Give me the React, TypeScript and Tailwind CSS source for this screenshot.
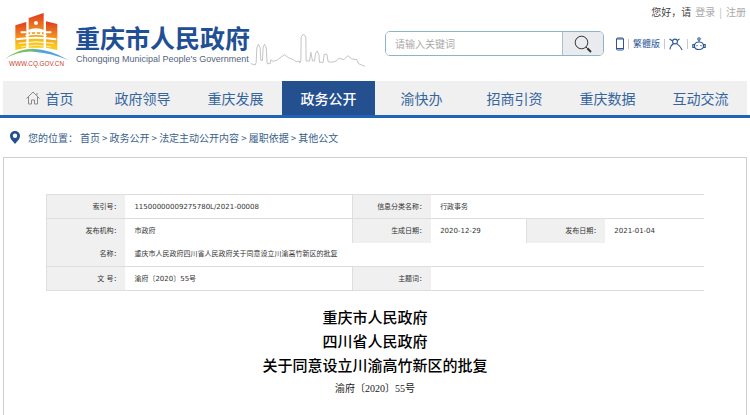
import React from 'react';

const navItems = ['首页', '政府领导', '重庆发展', '政务公开', '渝快办', '招商引资', '重庆数据', '互动交流'];

const crumbs = ['首页', '政务公开', '法定主动公开内容', '履职依据', '其他公文'];

function Emblem() {
    return (
        <svg viewBox="9 33 198 174" className="h-[58px] w-[66px] shrink-0" role="img" aria-label="重庆市人民政府">
            <defs>
                <linearGradient id="panel" x1="0" y1="0" x2="0" y2="1">
                    <stop offset="0" stopColor="#dd3b1f" />
                    <stop offset="0.4" stopColor="#ee7a1e" />
                    <stop offset="0.85" stopColor="#fbc81c" />
                </linearGradient>
                <linearGradient id="river" x1="0" y1="0" x2="1" y2="0">
                    <stop offset="0" stopColor="#7cc142" />
                    <stop offset="0.4" stopColor="#6fbf6a" />
                    <stop offset="0.6" stopColor="#4aa5dc" />
                    <stop offset="1" stopColor="#5b9fd8" />
                </linearGradient>
            </defs>
            <path d="M46 76 L79 66 V143 L46 150 Z" fill="url(#panel)" />
            <path d="M86 54 L131 39 V143 H86 Z" fill="url(#panel)" />
            <path d="M138 64 L172 72 V150 L138 143 Z" fill="url(#panel)" />
            <circle cx="108" cy="69" r="6" fill="#fff" />
            <path d="M82 91 Q108 78 134 91 V97 H82 Z" fill="#fff" />
            <path d="M90 97 H96 V104 H90 Z M105 97 H111 V104 H105 Z M120 97 H126 V104 H120 Z" fill="#fff" />
            <path d="M62 94 H79 V100 H62 Z M138 94 H154 V100 H138 Z" fill="#fff" />
            <path d="M76 107 Q108 99 140 107" fill="none" stroke="#fff" strokeWidth="4" />
            <path d="M49 118 Q108 108 169 118" fill="none" stroke="#fff" strokeWidth="6" />
            <path d="M56 130 Q108 121 161 130" fill="none" stroke="#fff" strokeWidth="3" />
            <path d="M64 140 Q108 132 152 140" fill="none" stroke="#fff" strokeWidth="2" />
            <path d="M14 178 Q52 146 98 146 Q152 148 205 180 Q150 158 100 155 Q52 153 14 178 Z" fill="url(#river)" />
            <text x="27" y="199" fontFamily="Liberation Sans, sans-serif" fontSize="19" fill="#c8412f">
                WWW.CQ.GOV.CN
            </text>
        </svg>
    );
}

function Skyline() {
    return (
        <svg viewBox="0 0 350 105" className="h-[35px] w-[117px]" fill="none" stroke="#b8b8b8" strokeWidth="2.5" aria-hidden="true">
            <path d="M2 92 L15 96 L18 88 L20 44 L25 34 L30 44 L32 82 L37 82 L39 42 L43 34 L48 42 L51 92 L60 92 L62 80 L68 85 L80 82 L90 74 L103 65 L115 74 L130 80 L138 86 L147 84 L149 90 L152 84 L153 12 L160 3 L167 12 L168 84 L178 84 L182 58 L187 84 L193 84 L196 62 L201 54 L206 64 L208 88 L219 88 L222 64 L230 64 L234 86 L244 88 L258 84 L267 76 L282 80 L293 68 L305 78 L320 80 L325 92 L345 100" />
        </svg>
    );
}

function Divider() {
    return <span className="h-[10px] w-px bg-[#c3cad4]" />;
}

function Header() {
    return (
        <header className="flex items-start pr-1 pb-3 pl-[3px]">
            <a href="#" className="flex shrink-0 items-start pt-[11px]">
                <Emblem />
                <div className="ml-1.5 pt-3 whitespace-nowrap">
                    <h1 className="text-[25px] leading-7 font-bold text-[#1f4f94]">重庆市人民政府</h1>
                    <p className="pl-px font-['Liberation_Sans',sans-serif] text-[9px] leading-4 text-[#56657c]">Chongqing Municipal People's Government</p>
                </div>
            </a>
            <div className="shrink-0 pt-[33px]">
                <Skyline />
            </div>
            <div className="ml-[18px] min-w-0 flex-1">
                <div className="flex h-[31px] items-start justify-end gap-1 pt-1 text-[10px] leading-4 text-[#444]">
                    <span>您好，请</span>
                    <a href="#" className="text-[#aaa]">登录</a>
                    <span className="text-[#bbb]">|</span>
                    <a href="#" className="text-[#aaa]">注册</a>
                </div>
                <div className="flex h-[25px] items-center">
                    <form className="flex h-full min-w-0 flex-1 overflow-hidden rounded-[5px] border border-[#8fb4c9]">
                        <input
                            type="text"
                            aria-label="搜索"
                            placeholder="请输入关键词"
                            className="min-w-0 flex-1 bg-white px-[9px] text-[10px] outline-none placeholder:text-[#aaa]"
                        />
                        <button type="button" aria-label="搜索" className="flex w-[41px] shrink-0 items-center justify-center border-l border-[#a9c0ce] bg-[#e9ebee]">
                            <svg viewBox="0 0 18 18" className="size-[18px]" fill="none" stroke="#333" strokeWidth="1">
                                <circle cx="7.5" cy="7.5" r="6.3" />
                                <path d="M12 12 L13.5 13.5" />
                                <path d="M13.3 13.3 L17 17" strokeWidth="2" />
                            </svg>
                        </button>
                    </form>
                    <nav className="ml-3 flex w-[130px] shrink-0 items-center gap-1 text-[9px] text-[#2c5794]">
                        <a href="#" aria-label="手机版">
                            <svg viewBox="0 0 8 14" className="h-[14px] w-2" fill="none" stroke="#2c5794">
                                <rect x="0.5" y="1" width="7" height="12" rx="1" />
                                <path d="M1 2 H7 M1 11.5 H7" />
                            </svg>
                        </a>
                        <Divider />
                        <a href="#">繁體版</a>
                        <Divider />
                        <a href="#" aria-label="无障碍">
                            <svg viewBox="0 0 14 14" className="size-[14px]" fill="none" stroke="#2c5794" strokeWidth="1.1">
                                <circle cx="6" cy="4.5" r="2.4" />
                                <path d="M0.5 2 L3.6 4 M8.2 3.6 L10.5 2 M4.5 6.5 C2.5 8 1.2 10 1 12.5 M7.8 6.6 C10 8.2 12 10.5 13.2 13" />
                            </svg>
                        </a>
                        <Divider />
                        <a href="#" aria-label="智能问答">
                            <svg viewBox="0 0 14 14" className="size-[14px]" fill="none" stroke="#2c5794" strokeWidth="1.1">
                                <circle cx="7" cy="2" r="1.2" />
                                <path d="M7 3.2 V5 M2.5 9 C2.5 6.5 4.2 5 7 5 C9.8 5 11.5 6.5 11.5 9 C11.5 11.5 9.8 12.5 7 12.5 C4.2 12.5 2.5 11.5 2.5 9 Z M2.5 7.6 H0.8 V10.4 H2.6 M11.5 7.6 H13.2 V10.4 H11.4" />
                                <path d="M5 8 V9.3 M9 8 V9.3" />
                            </svg>
                        </a>
                    </nav>
                </div>
            </div>
        </header>
    );
}

const labelCell = 'border-l border-[#dedede] bg-[#f0f0f0] pr-[5px] text-right font-normal';
const valueCell = 'pl-[9px]';

function InfoTable() {
    return (
        <table className="w-full table-fixed border-collapse font-['DejaVu_Sans','Noto_Sans_CJK_SC',sans-serif] text-[7px] leading-[10px] text-[#333]">
            <colgroup>
                <col className="w-[12%]" />
                <col className="w-[34.5%]" />
                <col className="w-[12%]" />
                <col className="w-[14.5%]" />
                <col className="w-[12%]" />
                <col className="w-[15%]" />
            </colgroup>
            <tbody>
                <tr className="h-6 border-t border-[#dedede]">
                    <th scope="row" className={labelCell}>索引号：</th>
                    <td className={valueCell}>11500000009275780L/2021-00008</td>
                    <th scope="row" className={labelCell}>信息分类名称：</th>
                    <td colSpan={3} className={valueCell}>行政事务</td>
                </tr>
                <tr className="h-6 border-t border-[#dedede]">
                    <th scope="row" className={labelCell}>发布机构：</th>
                    <td className={valueCell}>市政府</td>
                    <th scope="row" className={labelCell}>生成日期：</th>
                    <td className={valueCell}>2020-12-29</td>
                    <th scope="row" className={labelCell}>发布日期：</th>
                    <td className={valueCell}>2021-01-04</td>
                </tr>
                <tr className="h-6">
                    <th scope="row" className={labelCell}>名称：</th>
                    <td colSpan={5} className={valueCell}>重庆市人民政府四川省人民政府关于同意设立川渝高竹新区的批复</td>
                </tr>
                <tr className="h-6 border-y border-[#dedede]">
                    <th scope="row" className={labelCell}>文 号：</th>
                    <td className={valueCell}>渝府〔2020〕55号</td>
                    <th scope="row" className={labelCell}>主题词：</th>
                    <td colSpan={3} className={valueCell}></td>
                </tr>
            </tbody>
        </table>
    );
}

export default function App() {
    return (
        <div className="flex min-h-screen flex-col bg-white font-['Noto_Sans_CJK_SC',sans-serif]">
            <Header />
            <nav className="border-b-[3px] border-[#1f63b5] px-[3px]">
                <ul className="grid grid-cols-8 bg-[#f0f0f0] text-[14px] text-[#34659f]">
                    {navItems.map((item) => (
                        <li key={item}>
                            <a
                                href="#"
                                className={
                                    item === '政务公开'
                                        ? 'flex h-[34px] items-center justify-center bg-[#24508f] font-medium text-white'
                                        : 'flex h-[34px] items-center justify-center gap-1.5'
                                }
                            >
                                {item === '首页' && (
                                    <svg viewBox="0 0 14 14" className="size-[14px]" fill="none" stroke="#8a8a8a" aria-hidden="true">
                                        <path d="M0.5 7.5 L7 1 L13.5 7.5 M2.5 6 V13 H5.5 V9 H8.5 V13 H11.5 V6 M11 4.5 V2" />
                                    </svg>
                                )}
                                {item}
                            </a>
                        </li>
                    ))}
                </ul>
            </nav>
            <div className="flex h-[39px] items-center pl-[10px] text-[10px] text-[#3a5f8c]">
                <svg viewBox="0 0 10 13" className="mr-2 h-[13px] w-[10px]" aria-hidden="true">
                    <path d="M5 0 C2 0 0 2.2 0 5 C0 8 3 10.5 5 13 C7 10.5 10 8 10 5 C10 2.2 8 0 5 0 Z" fill="#24508f" />
                    <circle cx="5" cy="4.8" r="2.2" fill="#fff" />
                </svg>
                <span>您的位置：</span>
                <ol className="ml-0.5 flex">
                    {crumbs.map((crumb, i) => (
                        <li key={crumb}>
                            {i > 0 && <span className="px-0.5">&gt;</span>}
                            <a href="#">{crumb}</a>
                        </li>
                    ))}
                </ol>
            </div>
            <main className="mx-[3px] flex-1 border-x border-t border-[#cfcfcf] px-[42px] pt-9">
                <InfoTable />
                <article className="pt-[14px] text-center text-black">
                    <h2 className="text-[15px] leading-6 font-medium">
                        重庆市人民政府
                        <br />
                        四川省人民政府
                        <br />
                        关于同意设立川渝高竹新区的批复
                    </h2>
                    <p className="font-['Liberation_Serif','Noto_Sans_CJK_SC',serif] text-[10px] leading-6 text-[#222]">渝府〔2020〕55号</p>
                </article>
            </main>
        </div>
    );
}
